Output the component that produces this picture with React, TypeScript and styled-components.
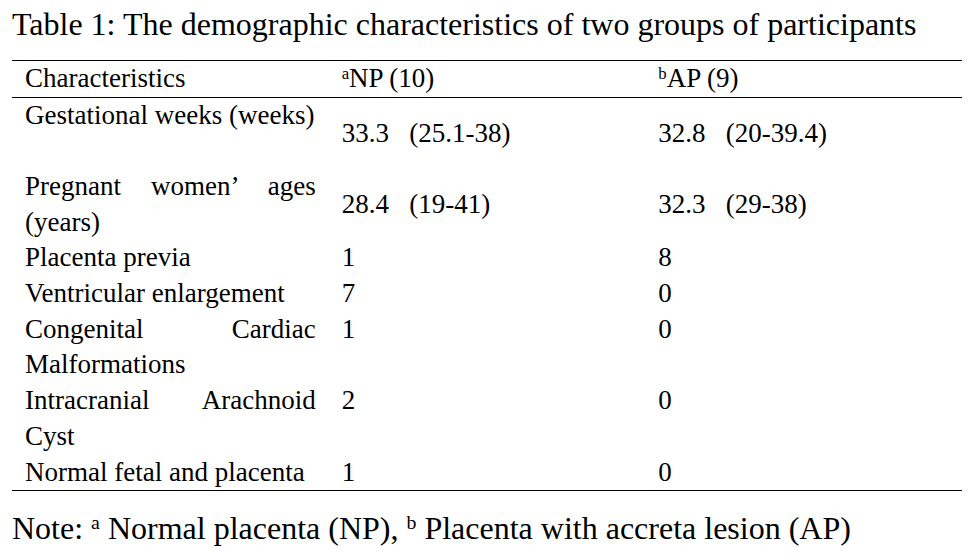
import styled, { createGlobalStyle } from "styled-components";

const GlobalStyle = createGlobalStyle`
  html, body {
    margin: 0;
    padding: 0;
    background: #ffffff;
  }
  body {
    font-family: "Liberation Serif", "Times New Roman", serif;
    color: #000000;
  }
`;

const Page = styled.div`
  width: 972px;
  height: 560px;
  padding: 4px 0 0 12px;
  box-sizing: border-box;
  overflow: hidden;
`;

const Caption = styled.div`
  font-size: 32px;
  line-height: 40px;
  white-space: nowrap;
`;

const Table = styled.table`
  width: 950px;
  margin-top: 16px;
  border-collapse: collapse;
  table-layout: fixed;
  font-size: 27px;
  line-height: 35.7px;
`;

const HeadCell = styled.th`
  font-weight: normal;
  text-align: left;
  padding: 0 13px;
  height: 36px;
  border-top: 1px solid #000;
  border-bottom: 1px solid #000;
  white-space: nowrap;
`;

const Row = styled.tr<{ $tall?: boolean }>`
  height: ${(p) => (p.$tall ? "71.4px" : "auto")};
  &:last-child td {
    border-bottom: 1px solid #000;
  }
`;

const Label = styled.td`
  padding: 0 13px;
  vertical-align: top;
  text-align: justify;
`;

const Value = styled.td<{ $middle?: boolean }>`
  padding: 0 13px;
  vertical-align: ${(p) => (p.$middle ? "middle" : "top")};
  white-space: nowrap;
`;

const Sup = styled.sup`
  font-size: 0.62em;
  line-height: 0;
  vertical-align: 0.5em;
`;

const Note = styled.div`
  margin-top: 17px;
  font-size: 32px;
  line-height: 40px;
  white-space: nowrap;
`;

type Item = { label: string; np: string; ap: string; tall?: boolean; middle?: boolean };

const rows: Item[] = [
  { label: "Gestational weeks (weeks)", np: "33.3\u2002 (25.1-38)", ap: "32.8\u2002 (20-39.4)", tall: true, middle: true },
  { label: "Pregnant women\u2019 ages (years)", np: "28.4\u2002 (19-41)", ap: "32.3\u2002 (29-38)", middle: true },
  { label: "Placenta previa", np: "1", ap: "8" },
  { label: "Ventricular enlargement", np: "7", ap: "0" },
  { label: "Congenital Cardiac Malformations", np: "1", ap: "0" },
  { label: "Intracranial Arachnoid Cyst", np: "2", ap: "0" },
  { label: "Normal fetal and placenta", np: "1", ap: "0" },
];

export default function App() {
  return (
    <>
      <GlobalStyle />
      <Page>
        <Caption>Table 1: The demographic characteristics of two groups of participants</Caption>
        <Table>
          <thead>
            <tr>
              <HeadCell>Characteristics</HeadCell>
              <HeadCell>
                <Sup>a</Sup>NP (10)
              </HeadCell>
              <HeadCell>
                <Sup>b</Sup>AP (9)
              </HeadCell>
            </tr>
          </thead>
          <tbody>
            {rows.map((r) => (
              <Row key={r.label} $tall={r.tall}>
                <Label>{r.label}</Label>
                <Value $middle={r.middle}>{r.np}</Value>
                <Value $middle={r.middle}>{r.ap}</Value>
              </Row>
            ))}
          </tbody>
        </Table>
        <Note>
          Note: <Sup>a</Sup> Normal placenta (NP), <Sup>b</Sup> Placenta with accreta lesion (AP)
        </Note>
      </Page>
    </>
  );
}
